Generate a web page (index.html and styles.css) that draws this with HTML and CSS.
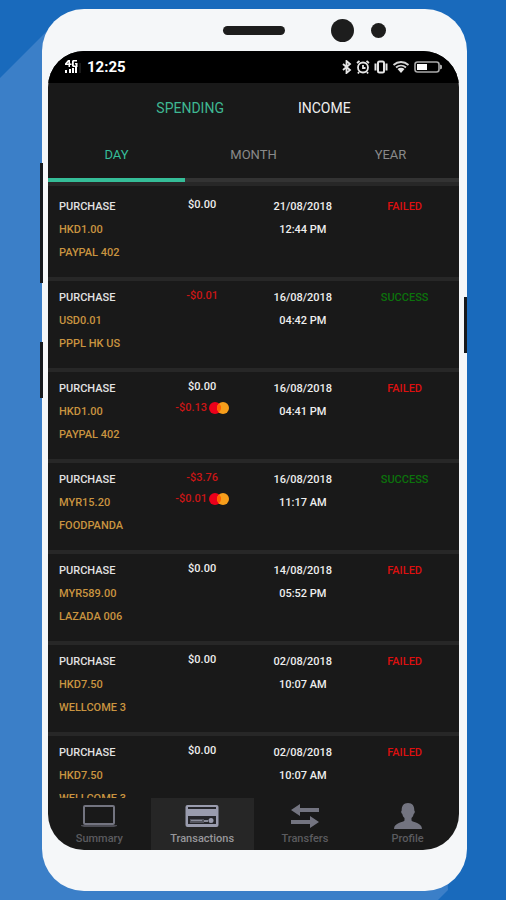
FILE: index.html
```html
<!DOCTYPE html>
<html lang="en">
<head>
<meta charset="utf-8">
<meta name="viewport" content="width=device-width, initial-scale=1">
<title>Transactions</title>
<link rel="stylesheet" href="styles.css">
</head>
<body>
<svg class="symbols" aria-hidden="true">
  <symbol id="cards" viewBox="0 0 20 12">
    <circle cx="6" cy="6" r="6" fill="#eb001b"/>
    <circle cx="14" cy="6" r="6" fill="#f79e1b"/>
    <path d="M10 1.500a6 6 0 0 1 0 9a6 6 0 0 1 0-9z" fill="#ff5f00"/>
  </symbol>
</svg>
<div class="phone">
  <span class="key key-volume"></span>
  <span class="key key-assist"></span>
  <span class="key key-power"></span>
  <div class="bezel">
    <span class="speaker"></span>
    <span class="lenses"><span class="camera"></span><span class="sensor"></span></span>
  </div>
  <div class="screen">
    <div class="status-bar">
      <svg class="signal" width="17" height="16" viewBox="0 0 17 16" fill="#fff">
        <path d="M4 1h2v3.500h1.500v1.500H6V8H4.500V6H1V4.500zM4.500 3L3 4.500h1.500zM9 1h4v1.500H9.800v4H12V5.500h-1V4h2.500v4H9L8 7V2z"/>
        <path d="M1 11h2v3H1zM5 10h2v4H5zM8 9h2v5H8zM11 8h2v6h-2z"/>
        <path d="M15.500 4h1v10h-1z" fill="#333"/>
      </svg>
      <span class="clock">12:25</span>
      <span class="indicators">
        <svg width="10" height="14" viewBox="0 0 10 14" fill="none" stroke="#e6e6e6" stroke-width="1.800"><path d="M1 4l7 6-3.500 3V1L8 4 1 10"/></svg>
        <svg width="14" height="14" viewBox="0 0 14 14" fill="none" stroke="#e6e6e6" stroke-width="1.800"><circle cx="7" cy="7.500" r="5"/><path d="M7 5v3h2.500M1 3l2.500-2M13 3l-2.500-2M3 12l-1 1.500M11 12l1 1.500"/></svg>
        <svg width="14" height="14" viewBox="0 0 14 14" fill="none" stroke="#e6e6e6" stroke-width="2"><rect x="4" y="1.500" width="6" height="11" rx="1.500"/><path d="M1.500 3.500v7M12.500 3.500v7"/></svg>
        <svg width="18" height="14" viewBox="0 0 18 14" fill="none" stroke="#d6d6d6" stroke-width="1.800"><path d="M1.500 5c4.500-4 10.500-4 15 0M4 7.500c3-2.600 7-2.600 10 0"/><path d="M5.500 9c2-1.800 5-1.800 7 0L9 13z" fill="#e6e6e6" stroke="none"/></svg>
        <svg class="battery" width="29" height="14" viewBox="0 0 29 14"><rect x="1" y="2" width="24" height="10" rx="2.500" fill="none" stroke="#aaa" stroke-width="1.600"/><path d="M3 4h10v6H3z" fill="#fff"/><path d="M26 4.500l2 1v3l-2 1z" fill="#aaa"/></svg>
      </span>
    </div>
    <header class="header">
      <div class="kinds">
        <button class="kind selected" type="button">SPENDING</button>
        <button class="kind" type="button">INCOME</button>
      </div>
      <div class="periods">
        <button class="period selected" type="button">DAY</button>
        <button class="period" type="button">MONTH</button>
        <button class="period" type="button">YEAR</button>
      </div>
    </header>
    <main class="list">
      <table class="transactions">
        <colgroup><col class="col-details"><col class="col-amount"><col class="col-date"><col></colgroup>
        <tbody>
          <tr>
            <td class="details"><p class="type">PURCHASE</p><p>HKD1.00</p><p>PAYPAL 402</p></td>
            <td class="amount"><p>$0.00</p></td>
            <td class="date"><p>21/08/2018</p><p>12:44 PM</p></td>
            <td class="status failed">FAILED</td>
          </tr>
          <tr>
            <td class="details"><p class="type">PURCHASE</p><p>USD0.01</p><p>PPPL HK US</p></td>
            <td class="amount"><p class="debit">-$0.01</p></td>
            <td class="date"><p>16/08/2018</p><p>04:42 PM</p></td>
            <td class="status success">SUCCESS</td>
          </tr>
          <tr>
            <td class="details"><p class="type">PURCHASE</p><p>HKD1.00</p><p>PAYPAL 402</p></td>
            <td class="amount"><p>$0.00</p><p class="debit fee">-$0.13 <svg width="20" height="12"><use href="#cards"/></svg></p></td>
            <td class="date"><p>16/08/2018</p><p>04:41 PM</p></td>
            <td class="status failed">FAILED</td>
          </tr>
          <tr>
            <td class="details"><p class="type">PURCHASE</p><p>MYR15.20</p><p>FOODPANDA</p></td>
            <td class="amount"><p class="debit">-$3.76</p><p class="debit fee">-$0.01 <svg width="20" height="12"><use href="#cards"/></svg></p></td>
            <td class="date"><p>16/08/2018</p><p>11:17 AM</p></td>
            <td class="status success">SUCCESS</td>
          </tr>
          <tr>
            <td class="details"><p class="type">PURCHASE</p><p>MYR589.00</p><p>LAZADA 006</p></td>
            <td class="amount"><p>$0.00</p></td>
            <td class="date"><p>14/08/2018</p><p>05:52 PM</p></td>
            <td class="status failed">FAILED</td>
          </tr>
          <tr>
            <td class="details"><p class="type">PURCHASE</p><p>HKD7.50</p><p>WELLCOME 3</p></td>
            <td class="amount"><p>$0.00</p></td>
            <td class="date"><p>02/08/2018</p><p>10:07 AM</p></td>
            <td class="status failed">FAILED</td>
          </tr>
          <tr>
            <td class="details"><p class="type">PURCHASE</p><p>HKD7.50</p><p>WELLCOME 3</p></td>
            <td class="amount"><p>$0.00</p></td>
            <td class="date"><p>02/08/2018</p><p>10:07 AM</p></td>
            <td class="status failed">FAILED</td>
          </tr>
        </tbody>
      </table>
    </main>
    <nav class="nav">
      <a class="nav-item" href="#summary">
        <svg width="36" height="28" viewBox="0 0 36 28"><rect x="3" y="4" width="30" height="18" rx="1" fill="none" stroke="#737480" stroke-width="2"/><path d="M0 23h36v1l-3 1H3l-3-1z" fill="#4c4c54"/></svg>
        Summary
      </a>
      <a class="nav-item current" href="#transactions">
        <svg width="34" height="28" viewBox="0 0 34 28"><rect x="0.500" y="3" width="33" height="22" rx="2" fill="#9a9cae"/><path d="M3 5h28v2H3zM3 14h28v8H3z" fill="#26262b"/><path d="M5 17h14v4H5z" fill="#55565f"/><path d="M6 18h11v1H6zM19 18h4v2h-4z" fill="#8a8c9a"/><circle cx="26" cy="18.500" r="2.500" fill="#9a9cae"/></svg>
        Transactions
      </a>
      <a class="nav-item" href="#transfers">
        <svg width="30" height="28" viewBox="0 0 30 28" fill="#737480"><path d="M1 8l9-6v4h19v4H10v4zM29 20l-9-6v4H1v4h19v4z"/></svg>
        Transfers
      </a>
      <a class="nav-item" href="#profile">
        <svg width="30" height="28" viewBox="0 0 30 28" fill="#737480"><path d="M15 1c4.500 0 6.500 3 6.300 7.500 1 .5.500 3-.6 3.500-.4 2-1.200 3-2.200 4v2.500c1 2 10.500 2 10.500 8.500H1c0-6.500 9.500-6.500 10.500-8.500V16c-1-1-1.800-2-2.200-4-1.100-.5-1.600-3-.6-3.500C8.500 4 10.500 1 15 1z"/></svg>
        Profile
      </a>
    </nav>
  </div>
</div>
</body>
</html>
```

FILE: styles.css
```css
* {
  box-sizing: border-box;
}

body {
  margin: 0;
  height: 100vh;
  padding: 9px 39px 9px 42px;
  background: #196abc;
  font-family: Roboto, "Liberation Sans", sans-serif;
  position: relative;
  overflow: hidden;
}

/* long diagonal shade cast by the phone */
body::before {
  content: "";
  position: absolute;
  inset: 0;
  background: #3b7fc8;
  clip-path: polygon(0 78px, 56px 22px, calc(100% - 80px) 50%, calc(100% - 58px) calc(100% - 10px), calc(100% - 68px) 100%, 0 100%);
}

p {
  margin: 0;
}

button {
  border: 0;
  padding: 0;
  background: none;
  font: inherit;
}

.symbols {
  position: absolute;
  width: 0;
  height: 0;
}

.phone {
  position: relative;
  display: flex;
  flex-direction: column;
  height: 100%;
  padding: 0 8px 41px 6px;
  border-radius: 42px;
  background: #f5f7f9;
}

.key {
  position: absolute;
  width: 3px;
  background: #16191d;
}

.key-volume {
  left: -2px;
  top: 154px;
  height: 120px;
}

.key-assist {
  left: -2px;
  top: 333px;
  height: 56px;
}

.key-power {
  right: 0;
  top: 288px;
  height: 56px;
}

.bezel {
  display: grid;
  grid-template-columns: 1fr auto 1fr;
  align-items: center;
  height: 42px;
  flex: none;
}

.speaker {
  grid-column: 2;
  width: 62px;
  height: 9px;
  border-radius: 5px;
  background: #1d1d1d;
}

.lenses {
  display: flex;
  align-items: center;
  gap: 17px;
  padding-left: 46px;
}

.camera,
.sensor {
  border-radius: 50%;
  background: #1d1d1d;
}

.camera {
  width: 23px;
  height: 23px;
}

.sensor {
  width: 15px;
  height: 15px;
}

.screen {
  flex: 1;
  min-height: 0;
  display: flex;
  flex-direction: column;
  overflow: hidden;
  border-radius: 36px;
  background: #191919;
  color: #eee;
}

.status-bar {
  flex: none;
  display: flex;
  align-items: center;
  height: 32px;
  padding: 0 16px;
  background: #000;
}

.clock {
  margin-left: 6px;
  font-size: 15px;
  font-weight: 700;
  color: #fff;
}

.indicators {
  display: flex;
  align-items: center;
  gap: 4px;
  margin-left: auto;
}

.header {
  flex: none;
}

.kinds {
  display: flex;
  justify-content: center;
  gap: 74px;
  height: 49px;
}

.kind {
  font-size: 14px;
  color: #eee;
}

.kind.selected {
  color: #3fb792;
}

.periods {
  display: grid;
  grid-template-columns: repeat(3, 1fr);
  height: 50px;
}

.period {
  padding-bottom: 2px;
  border-bottom: 4px solid #333;
  font-size: 13px;
  color: #8a8a8a;
}

.period.selected {
  border-color: #35bd98;
  color: #35bd98;
}

.list {
  flex: 1;
  min-height: 0;
  overflow: hidden;
  padding-top: 4px;
  border-top: 4px solid #272727;
}

.transactions {
  width: 100%;
  table-layout: fixed;
  border-spacing: 0;
  font-size: 11px;
  font-weight: 500;
  line-height: 23px;
  text-align: center;
}

.col-details {
  width: 26%;
}

.col-amount {
  width: 23%;
}

.col-date {
  width: 26%;
}

.transactions td {
  padding: 5px 0 13px;
  border-bottom: 4px solid #272727;
  vertical-align: top;
}

.transactions .details {
  padding-left: 11px;
  text-align: left;
  white-space: nowrap;
  color: #c99440;
}

.type {
  color: #e2e2e2;
}

.transactions .amount {
  padding-top: 4px;
  line-height: 21px;
}

.debit {
  color: #c91616;
}

.fee {
  display: flex;
  align-items: center;
  justify-content: center;
  gap: 2px;
}

.transactions .status {
  padding-right: 6px;
}

.failed {
  color: #dc1010;
}

.success {
  color: #0c720c;
}

.nav {
  flex: none;
  display: grid;
  grid-template-columns: repeat(4, 1fr);
  height: 52px;
}

.nav-item {
  display: flex;
  flex-direction: column;
  align-items: center;
  padding-top: 4px;
  font-size: 11px;
  line-height: 18px;
  font-weight: 500;
  color: #5b5b5f;
  text-decoration: none;
}

.nav-item.current {
  background: #262626;
  color: #97979b;
}
```
